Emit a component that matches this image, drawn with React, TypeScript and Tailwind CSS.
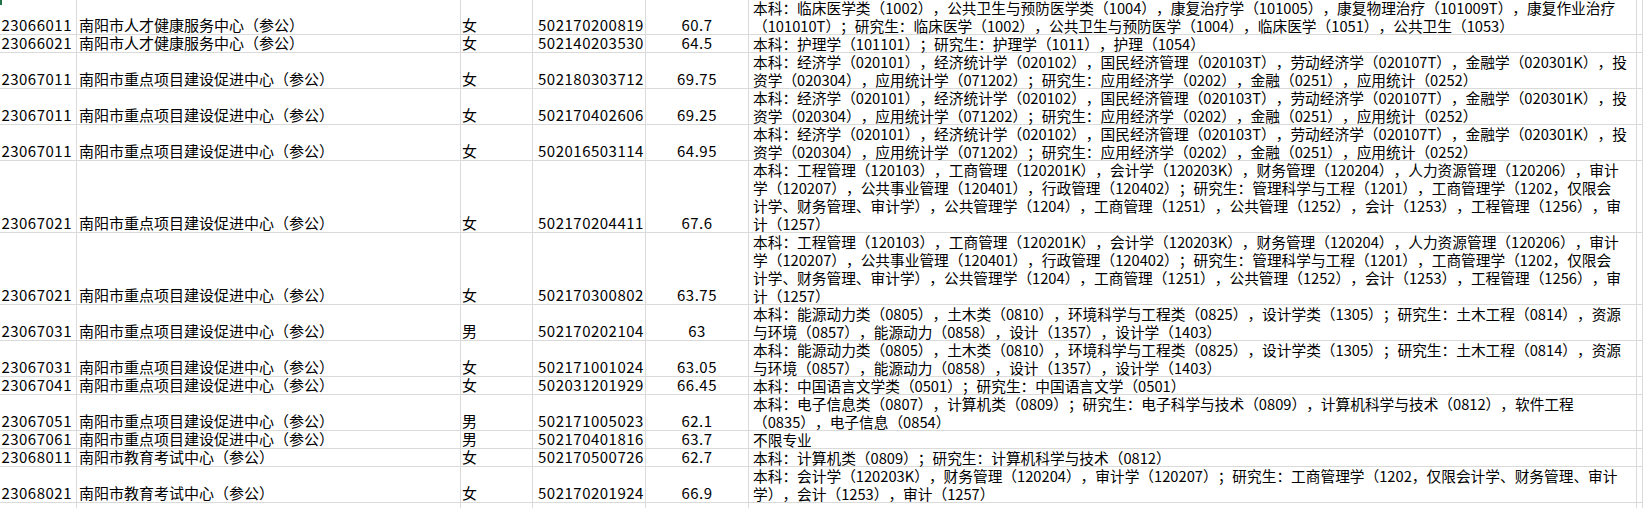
import type { JSX } from "react";

interface Row {
  code: string;
  unit: string;
  sex: string;
  ticket: string;
  score: string;
  major: string[];
}

const ZD = "南阳市重点项目建设促进中心（参公）";

const ECON = [
  "本科：经济学（020101），经济统计学（020102），国民经济管理（020103T），劳动经济学（020107T），金融学（020301K），投",
  "资学（020304），应用统计学（071202）；研究生：应用经济学（0202），金融（0251），应用统计（0252）",
];

const MGMT = [
  "本科：工程管理（120103），工商管理（120201K），会计学（120203K），财务管理（120204），人力资源管理（120206），审计",
  "学（120207），公共事业管理（120401），行政管理（120402）；研究生：管理科学与工程（1201），工商管理学（1202，仅限会",
  "计学、财务管理、审计学），公共管理学（1204），工商管理（1251），公共管理（1252），会计（1253），工程管理（1256），审",
  "计（1257）",
];

const ENERGY = [
  "本科：能源动力类（0805），土木类（0810），环境科学与工程类（0825），设计学类（1305）；研究生：土木工程（0814），资源",
  "与环境（0857），能源动力（0858），设计（1357），设计学（1403）",
];

const rows: Row[] = [
  {
    code: "23066011",
    unit: "南阳市人才健康服务中心（参公）",
    sex: "女",
    ticket: "502170200819",
    score: "60.7",
    major: [
      "本科：临床医学类（1002），公共卫生与预防医学类（1004），康复治疗学（101005），康复物理治疗（101009T），康复作业治疗",
      "（101010T）；研究生：临床医学（1002），公共卫生与预防医学（1004），临床医学（1051），公共卫生（1053）",
    ],
  },
  {
    code: "23066021",
    unit: "南阳市人才健康服务中心（参公）",
    sex: "女",
    ticket: "502140203530",
    score: "64.5",
    major: ["本科：护理学（101101）；研究生：护理学（1011），护理（1054）"],
  },
  { code: "23067011", unit: ZD, sex: "女", ticket: "502180303712", score: "69.75", major: ECON },
  { code: "23067011", unit: ZD, sex: "女", ticket: "502170402606", score: "69.25", major: ECON },
  { code: "23067011", unit: ZD, sex: "女", ticket: "502016503114", score: "64.95", major: ECON },
  { code: "23067021", unit: ZD, sex: "女", ticket: "502170204411", score: "67.6", major: MGMT },
  { code: "23067021", unit: ZD, sex: "女", ticket: "502170300802", score: "63.75", major: MGMT },
  { code: "23067031", unit: ZD, sex: "男", ticket: "502170202104", score: "63", major: ENERGY },
  { code: "23067031", unit: ZD, sex: "女", ticket: "502171001024", score: "63.05", major: ENERGY },
  {
    code: "23067041",
    unit: ZD,
    sex: "女",
    ticket: "502031201929",
    score: "66.45",
    major: ["本科：中国语言文学类（0501）；研究生：中国语言文学（0501）"],
  },
  {
    code: "23067051",
    unit: ZD,
    sex: "男",
    ticket: "502171005023",
    score: "62.1",
    major: [
      "本科：电子信息类（0807），计算机类（0809）；研究生：电子科学与技术（0809），计算机科学与技术（0812），软件工程",
      "（0835），电子信息（0854）",
    ],
  },
  { code: "23067061", unit: ZD, sex: "男", ticket: "502170401816", score: "63.7", major: ["不限专业"] },
  {
    code: "23068011",
    unit: "南阳市教育考试中心（参公）",
    sex: "女",
    ticket: "502170500726",
    score: "62.7",
    major: ["本科：计算机类（0809）；研究生：计算机科学与技术（0812）"],
  },
  {
    code: "23068021",
    unit: "南阳市教育考试中心（参公）",
    sex: "女",
    ticket: "502170201924",
    score: "66.9",
    major: [
      "本科：会计学（120203K），财务管理（120204），审计学（120207）；研究生：工商管理学（1202，仅限会计学、财务管理、审计",
      "学），会计（1253），审计（1257）",
    ],
  },
];

// excel-ish cell: grid line on right + bottom, no wrapping
const cell = "flex shrink-0 border-r border-b border-[#dadada] whitespace-nowrap";

function SheetRow({ row }: { row: Row | null }): JSX.Element {
  const h = row ? row.major.length * 18 : 18;
  return (
    <div className="flex" style={{ height: h }}>
      <div className={`${cell} w-[77px] items-end justify-end pr-[4px] tracking-[0.5px]`}>{row?.code}</div>
      <div className={`${cell} w-[384px] items-end pl-[2px]`}>{row?.unit}</div>
      <div className={`${cell} w-[72px] items-end pl-[1px]`}>{row?.sex}</div>
      <div className={`${cell} w-[113px] items-end pl-[5px] tracking-[0.5px]`}>{row?.ticket}</div>
      <div className={`${cell} w-[103px] items-end justify-center tracking-[0.5px]`}>{row?.score}</div>
      <div className={`${cell} w-[888px] flex-col items-start pl-[4px] text-[14.7px]`}>
        {row?.major.map((line, i) => (
          <div key={i} className="h-[18px] shrink-0">
            {line}
          </div>
        ))}
      </div>
      <div className={`${cell} flex-1`} />
    </div>
  );
}

export default function App(): JSX.Element {
  return (
    <div className="relative h-[508px] w-[1643px] overflow-hidden bg-white font-['Noto_Sans_CJK_SC',sans-serif] text-[15px] leading-[18px] text-black [text-spacing-trim:space-all]">
      <div className="-mt-px flex flex-col">
        {rows.map((row, i) => (
          <SheetRow key={i} row={row} />
        ))}
        <SheetRow row={null} />
      </div>
      <div className="absolute left-0 top-0 h-[5px] w-[2px] bg-[#217346]" />
    </div>
  );
}
